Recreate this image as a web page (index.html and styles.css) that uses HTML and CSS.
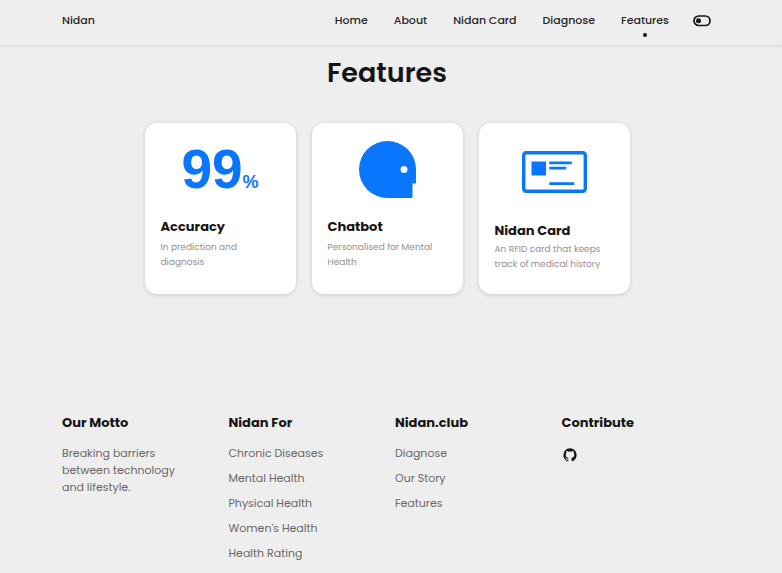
FILE: index.html
```
<!DOCTYPE html>
<html lang="en">
<head>
    <meta charset="UTF-8">
    <meta name="viewport" content="width=device-width, initial-scale=1.0">
    <title>Nidan</title>
    <link rel="stylesheet" href="styles.css">
</head>
<body>
    <!-- header -->
    <header class="header">
        <nav class="nav container">
            <a href="#" class="nav-logo">Nidan</a>
            <ul class="nav-list">
                <li><a href="#home" class="nav-link">Home</a></li>
                <li><a href="#about" class="nav-link">About</a></li>
                <li><a href="#card" class="nav-link">Nidan Card</a></li>
                <li><a href="#diagnose" class="nav-link">Diagnose</a></li>
                <li><a href="#features" class="nav-link active">Features</a></li>
            </ul>
            <button class="theme-button" type="button" aria-label="Change theme">
                <svg viewBox="0 0 18 12">
                    <rect x="1" y="1" width="16" height="9.500" rx="4.750" fill="none" stroke="currentColor" stroke-width="1.700"/>
                    <circle cx="5.500" cy="5.750" r="2.500" fill="currentColor"/>
                </svg>
            </button>
        </nav>
    </header>

    <main>
        <!-- features -->
        <section class="features container" id="features">
            <h2 class="section-title">Features</h2>
            <div class="features-grid">
                <article class="card">
                    <div class="card-img percent">99<span>%</span></div>
                    <h3 class="card-title">Accuracy</h3>
                    <p class="card-text">In prediction and diagnosis</p>
                </article>
                <article class="card">
                    <div class="card-img">
                        <svg class="bot" viewBox="0 0 57 57">
                            <path d="M28.500 0A28.500 28.500 0 0 1 57 28.500V42.500H53.500V57H28.500A28.500 28.500 0 0 1 28.500 0Z" fill="#0a76fb"/>
                            <circle cx="45" cy="28.500" r="3.500" fill="#fff"/>
                        </svg>
                    </div>
                    <h3 class="card-title">Chatbot</h3>
                    <p class="card-text">Personalised for Mental Health</p>
                </article>
                <article class="card">
                    <div class="card-img tall">
                        <svg class="rfid" viewBox="0 0 65 42">
                            <rect x="1.700" y="1.700" width="61.600" height="38.600" rx="2.500" fill="none" stroke="#0a76fb" stroke-width="3.400"/>
                            <path d="M9.500 10.500h14.500v14H9.500zM27.300 10.500h22.500v2.700H27.300zM27.300 15.800h17v2.700h-17zM27.300 31.200h25v2.700h-25z" fill="#0a76fb"/>
                        </svg>
                    </div>
                    <h3 class="card-title">Nidan Card</h3>
                    <p class="card-text">An RFID card that keeps track of medical history</p>
                </article>
            </div>
        </section>
    </main>

    <!-- footer -->
    <footer class="footer container">
        <div>
            <h3 class="footer-title">Our Motto</h3>
            <p class="footer-text">Breaking barriers between technology and lifestyle.</p>
        </div>
        <div>
            <h3 class="footer-title">Nidan For</h3>
            <ul class="footer-list">
                <li><a href="#">Chronic Diseases</a></li>
                <li><a href="#">Mental Health</a></li>
                <li><a href="#">Physical Health</a></li>
                <li><a href="#">Women's Health</a></li>
                <li><a href="#">Health Rating</a></li>
            </ul>
        </div>
        <div>
            <h3 class="footer-title">Nidan.club</h3>
            <ul class="footer-list">
                <li><a href="#">Diagnose</a></li>
                <li><a href="#">Our Story</a></li>
                <li><a href="#">Features</a></li>
            </ul>
        </div>
        <div>
            <h3 class="footer-title">Contribute</h3>
            <a href="#" class="footer-social" aria-label="GitHub">
                <svg viewBox="0 0 24 24">
                    <path fill="currentColor" d="M12 2A10 10 0 0 0 2 12c0 4.420 2.870 8.170 6.840 9.500.5.080.66-.23.66-.5v-1.690c-2.770.6-3.360-1.340-3.360-1.340-.46-1.160-1.110-1.470-1.110-1.470-.91-.62.07-.6.07-.6 1 .07 1.530 1.030 1.530 1.030.87 1.520 2.340 1.070 2.910.83.09-.65.35-1.090.63-1.340-2.220-.25-4.550-1.110-4.550-4.920 0-1.110.38-2 1.030-2.710-.1-.25-.45-1.290.1-2.640 0 0 .84-.27 2.750 1.020.79-.22 1.650-.33 2.500-.33s1.710.11 2.500.33c1.910-1.290 2.750-1.020 2.750-1.020.55 1.350.2 2.390.1 2.640.65.71 1.030 1.600 1.030 2.710 0 3.820-2.340 4.660-4.570 4.910.36.31.69.92.69 1.850V21c0 .27.16.59.67.5C19.140 20.160 22 16.420 22 12A10 10 0 0 0 12 2z"/>
                </svg>
            </a>
        </div>
    </footer>
</body>
</html>
```
FILE: styles.css
```
*{
    box-sizing: border-box;
    margin: 0;
    padding: 0;
}
body{
    font-family: Poppins, Inter, sans-serif;
    font-size: 11px;
    background-color: #eee;
    color: #161414;
}
ul{
    list-style: none;
}
a{
    color: inherit;
    text-decoration: none;
}
svg{
    display: block;
}
.container{
    padding-left: 62px;
    padding-right: 70px;
}

/* header */
.header{
    box-shadow: 0 1px 3px rgba(0, 0, 0, .12);
}
.nav{
    display: flex;
    align-items: center;
    height: 45px;
    padding-right: 71px;
    padding-bottom: 4px;
    font-weight: 500;
}
.nav-list{
    display: flex;
    gap: 26px;
    margin-left: auto;
}
.nav-logo,
.nav-link{
    display: block;
    position: relative;
    font-size: 11px;
    line-height: 17px;
    color: #282525;
}
/* dot under the current page */
.active::after{
    content: "";
    position: absolute;
    left: 50%;
    bottom: -8px;
    width: 4px;
    height: 4px;
    margin-left: -2px;
    border-radius: 50%;
    background-color: #161414;
}
.theme-button{
    width: 18px;
    margin-left: 24px;
    border: none;
    background: none;
    color: #161414;
    cursor: pointer;
}

/* features */
.section-title{
    padding-top: 8px;
    font-size: 27px;
    font-weight: 600;
    line-height: 40px;
    text-align: center;
}
.features-grid{
    display: grid;
    grid-template-columns: repeat(3, 1fr);
    gap: 16px;
    max-width: 485px;
    margin: 30px auto 0;
}
.card{
    min-height: 171px;
    padding: 16px;
    border-radius: 12px;
    background-color: #fff;
    box-shadow: 0 1px 4px rgba(0, 0, 0, .15);
}
.card-img{
    display: flex;
    align-items: center;
    justify-content: center;
    height: 60px;
    margin-bottom: 17px;
}
.card-img.tall{
    height: 66px;
    margin-bottom: 15px;
}
.tall ~ .card-text{
    margin-top: 1px;
}
.percent{
    align-items: baseline;
    font-family: "Liberation Sans", sans-serif;
    font-size: 55px;
    font-weight: 700;
    line-height: 60px;
    color: #0a76fb;
}
.percent span{
    font-size: 18px;
}
.bot{
    width: 57px;
}
.rfid{
    width: 65px;
}
.card-title{
    font-size: 13px;
    font-weight: 700;
    line-height: 21px;
}
.card-text{
    margin-top: 3px;
    font-size: 9px;
    line-height: 15px;
    color: #939090;
}

/* footer */
.footer{
    display: grid;
    grid-template-columns: repeat(4, 1fr);
    gap: 16px;
    padding-top: 118px;
    color: #6b6767;
}
.footer-title{
    margin-bottom: 12px;
    font-size: 13px;
    font-weight: 700;
    line-height: 21px;
    color: #161414;
}
.footer-text{
    max-width: 120px;
    line-height: 17px;
}
.footer-list{
    display: grid;
    gap: 8px;
    line-height: 17px;
}
.footer-social{
    display: inline-block;
    margin: 2px 0;
    color: #161414;
}
.footer-social svg{
    width: 16px;
}
```
